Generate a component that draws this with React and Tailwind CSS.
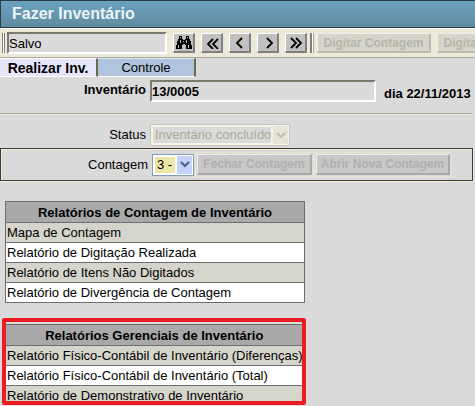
import React from 'react';

const stockReports = [
  'Mapa de Contagem',
  'Relatório de Digitação Realizada',
  'Relatório de Itens Não Digitados',
  'Relatório de Divergência de Contagem',
];

const managementReports = [
  'Relatório Físico-Contábil de Inventário (Diferenças)',
  'Relatório Físico-Contábil de Inventário (Total)',
  'Relatório de Demonstrativo de Inventário',
];

function Binoculars() {
  return (
    <svg width="16" height="14" viewBox="0 0 16 14" shapeRendering="crispEdges" aria-hidden="true">
      <path
        fill="#000"
        d="M3 0h3v3h1v1h2V3h1V0h3v3h1v2h1v4h1v4h-6V9H9V8H7v1H6v4H0V9h1V5h1V3h1z"
      />
      <path fill="#c0c0c0" d="M4 1h1v1H4zM11 1h1v1h-1zM4 4h1v3H4zM10 4h1v3h-1zM2 9h1v3H2zM12 9h1v3h-1zM7 5h1v1H7z" />
    </svg>
  );
}

function Arrow({ points }) {
  return (
    <svg width="14" height="12" viewBox="0 0 14 12" aria-hidden="true">
      {points.map((p) => (
        <polyline key={p} points={p} fill="none" stroke="#000" strokeWidth="1.8" />
      ))}
    </svg>
  );
}

function ToolButton({ label, children }) {
  return (
    <button
      type="button"
      aria-label={label}
      className="flex h-5 w-[22px] shrink-0 items-center justify-center border-t border-l border-r-2 border-b-2 border-t-white border-l-white border-r-[#808080] border-b-[#808080] bg-[#c0c0c0]"
    >
      {children}
    </button>
  );
}

function PickList({ id, value, disabled, className }) {
  return (
    <div
      className={`relative h-[22px] shrink-0 border p-[2px] ${
        disabled ? 'border-[#c9c7ba] bg-[#f5f4ea]' : 'border-[#7f9db9] bg-white'
      } ${className}`}
    >
      <select
        id={id}
        disabled={disabled}
        className={`block h-4 w-full appearance-none pl-[2px] text-[13px] leading-4 opacity-100 outline-none ${
          disabled ? 'bg-[#dadada] text-[#aca899]' : 'bg-[#ece5a6] text-black'
        }`}
      >
        <option>{value}</option>
      </select>
      <span
        className={`pointer-events-none absolute inset-y-0 right-0 flex w-[18px] items-center justify-center border-y border-r border-l-2 ${
          disabled ? 'border-[#f5f4ea] bg-[#e6e4d8] text-[#c3c1b2]' : 'border-white bg-[#c1d3fb] text-[#4d6185]'
        }`}
      >
        <svg width="10" height="7" viewBox="0 0 10 7" aria-hidden="true">
          <path d="M1 1l4 4 4-4" fill="none" stroke="currentColor" strokeWidth="2.2" />
        </svg>
      </span>
    </div>
  );
}

function CountButton({ children, className }) {
  return (
    <div className={`shrink-0 border border-[#e6e3d0] p-px ${className}`}>
      <button
        type="button"
        disabled
        className="block h-[21px] w-full border-t border-l border-r-2 border-b-2 border-t-[#eeeeee] border-l-[#eeeeee] border-r-[#a9a9a9] border-b-[#a9a9a9] bg-[#c8c8c8] text-xs leading-4 font-bold whitespace-nowrap text-[#b0b0b0]"
      >
        {children}
      </button>
    </div>
  );
}

function BarButton({ children }) {
  return (
    <button
      type="button"
      disabled
      className="h-5 w-[114px] shrink-0 border-t border-l border-r-2 border-b-2 border-t-[#f2f1e8] border-l-[#f2f1e8] border-r-[#bdbcb0] border-b-[#bdbcb0] bg-[#d5d4ca] text-xs leading-4 font-bold whitespace-nowrap text-[#b6b5a9]"
    >
      {children}
    </button>
  );
}

function ReportTable({ title, rows }) {
  return (
    <table className="w-full border-collapse border border-[#6d6d6d] leading-[18px]">
      <thead>
        <tr>
          <th className="h-[21px] border border-[#6d6d6d] bg-[#a9a9a9] p-0 pt-[2px] font-bold">{title}</th>
        </tr>
      </thead>
      <tbody>
        {rows.map((row) => (
          <tr key={row} className="odd:bg-[#d6d5cb] even:bg-white">
            <td className="h-5 border border-[#6d6d6d] p-0 pt-px pl-px whitespace-nowrap">{row}</td>
          </tr>
        ))}
      </tbody>
    </table>
  );
}

export default function App() {
  return (
    <div className="min-h-screen overflow-hidden bg-[#dadada] font-['Liberation_Sans',Arial,sans-serif] text-[13px] text-black">
      <header className="flex h-7 items-center border-y border-l border-[#303c44] bg-linear-to-b from-[#69a3c0] to-[#618b9f] pl-[11px]">
        <h1 className="text-base leading-5 font-bold text-[#eef3f5]">Fazer Inventário</h1>
      </header>

      <div className="flex h-[30px] items-center overflow-hidden border-t border-b border-t-white border-b-[#aca899] bg-[#ece9d8] pl-[2px]">
        <span className="mr-[2px] h-5 w-[3px] shrink-0 border-r border-l border-r-[#808080] border-l-[#808080] bg-white" />
        <input
          aria-label="Situação"
          readOnly
          defaultValue="Salvo"
          className="h-[22px] w-40 shrink-0 border-2 border-t-[#7d7a6c] border-r-white border-b-white border-l-[#7d7a6c] bg-[#dadada] leading-4 outline-none"
        />
        <div className="ml-[6px] flex shrink-0 gap-[6px]">
          <ToolButton label="Pesquisar">
            <Binoculars />
          </ToolButton>
          <ToolButton label="Primeiro">
            <Arrow points={['8,2 3,7 8,12', '13,2 8,7 13,12']} />
          </ToolButton>
          <ToolButton label="Anterior">
            <Arrow points={['9,1 4,6 9,11']} />
          </ToolButton>
          <ToolButton label="Próximo">
            <Arrow points={['6,1 11,6 6,11']} />
          </ToolButton>
          <ToolButton label="Último">
            <Arrow points={['2,1 7,6 2,11', '7,1 12,6 7,11']} />
          </ToolButton>
        </div>
        <span className="mx-[3px] h-5 w-1 shrink-0 border-r border-l-2 border-r-[#a0a0a0] border-l-[#808080] bg-white" />
        <div className="flex gap-[6px]">
          <BarButton>Digitar Contagem</BarButton>
          <BarButton>Digitar Contagem</BarButton>
        </div>
      </div>

      <nav className="flex h-[19px]" role="tablist">
        <button
          type="button"
          role="tab"
          aria-selected="true"
          className="w-[98px] border-t border-r-2 border-b border-t-white border-r-[#6b6950] border-b-white bg-[#e6e6fa] text-sm leading-4 font-bold"
        >
          Realizar Inv.
        </button>
        <button
          type="button"
          role="tab"
          aria-selected="false"
          className="w-[98px] border-t border-r-2 border-b border-t-[#dbe6f4] border-r-[#6b6950] border-b-white bg-[#b0c4de] leading-4"
        >
          Controle
        </button>
      </nav>

      <main>
        <section className="mr-[3px] flex h-[37px] items-start border-b border-[#aca899] pt-[3px] shadow-[0_1px_0_#f0ecd8]">
          <label htmlFor="inventario" className="mr-1 w-[146px] shrink-0 text-right leading-5 font-bold">
            Inventário
          </label>
          <input
            id="inventario"
            readOnly
            defaultValue="13/0005"
            className="h-[22px] w-[226px] shrink-0 border-2 border-t-[#7d7a6c] border-r-white border-b-white border-l-[#7d7a6c] bg-[#dadada] leading-4 font-bold outline-none"
          />
          <span className="ml-2 pt-1 leading-5 font-bold whitespace-nowrap">dia 22/11/2013</span>
        </section>

        <div className="mt-[10px] flex items-center">
          <label htmlFor="status" className="mr-1 w-[146px] shrink-0 text-right leading-5">
            Status
          </label>
          <PickList id="status" value="Inventário concluído" disabled className="w-[140px]" />
        </div>

        <section className="mt-[2px] mr-[2px] border border-[#3c3c3c] shadow-[0_1px_0_#f5ecd0,1px_0_0_#f5ecd0,inset_1px_1px_0_#f5ecd0]">
          <div className="flex h-[31px] items-center">
            <label htmlFor="contagem" className="mr-1 w-[147px] shrink-0 text-right leading-5">
              Contagem
            </label>
            <PickList id="contagem" value="3 -" className="w-[42px]" />
            <CountButton className="ml-px w-[119px]">Fechar Contagem</CountButton>
            <CountButton className="w-[138px]">Abrir Nova Contagem</CountButton>
          </div>
        </section>

        <section className="mt-5 ml-[5px] w-[300px]">
          <ReportTable title="Relatórios de Contagem de Inventário" rows={stockReports} />
        </section>

        <section className="mt-[15px] ml-[2px] h-[87px] w-[304px] overflow-hidden rounded-xs border-4 border-[#ed1c24] pt-[2px]">
          <div className="-ml-px">
            <ReportTable title="Relatórios Gerenciais de Inventário" rows={managementReports} />
          </div>
        </section>
      </main>
    </div>
  );
}
